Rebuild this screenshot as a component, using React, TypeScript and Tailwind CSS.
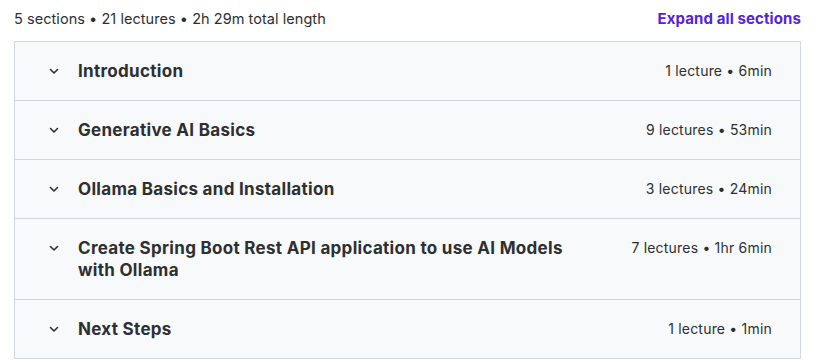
import React from 'react';

const sections = [
    { title: 'Introduction', meta: '1 lecture • 6min' },
    { title: 'Generative AI Basics', meta: '9 lectures • 53min' },
    { title: 'Ollama Basics and Installation', meta: '3 lectures • 24min' },
    { title: 'Create Spring Boot Rest API application to use AI Models with Ollama', meta: '7 lectures • 1hr 6min' },
    { title: 'Next Steps', meta: '1 lecture • 1min' },
];

const Chevron = () => (
    <svg width="12" height="12" viewBox="0 0 24 24" fill="none" stroke="currentColor" strokeWidth="3.2" strokeLinecap="round" strokeLinejoin="round">
        <path d="M5 9l7 7 7-7" />
    </svg>
);

const App = () => {
    return (
        <div className="w-[816px] h-[362px] bg-white text-[#2d2f31]" style={{ fontFamily: 'Inter, "Liberation Sans", sans-serif' }}>
            {/* Header line */}
            <div className="flex items-center justify-between pl-[14px] pr-[15px] h-[37px] pt-[1px]">
                <span className="text-[14.5px] tracking-[0.05px]">5 sections • 21 lectures • 2h 29m total length</span>
                <button className="text-[15px] font-bold text-[#5624d0] tracking-[0.1px]">Expand all sections</button>
            </div>
            {/* Curriculum list */}
            <div className="ml-[14px] w-[787px] mt-[4px] border border-b-0 border-[#d1d7dc]">
                {sections.map((s) => (
                    <div key={s.title} className="flex items-start bg-[#f7f9fa] border-b border-[#d1d7dc] pl-[33px] pr-[28px] py-[18px]">
                        <div className="h-[22px] flex items-center mr-[18px]">
                            <Chevron />
                        </div>
                        <div className="flex-1 text-[17px] leading-[22px] font-bold pr-[60px] tracking-[0.3px]">{s.title}</div>
                        <div className="text-[14px] leading-[22px] whitespace-nowrap tracking-[0.2px]">{s.meta}</div>
                    </div>
                ))}
            </div>
        </div>
    );
};

export default App;
